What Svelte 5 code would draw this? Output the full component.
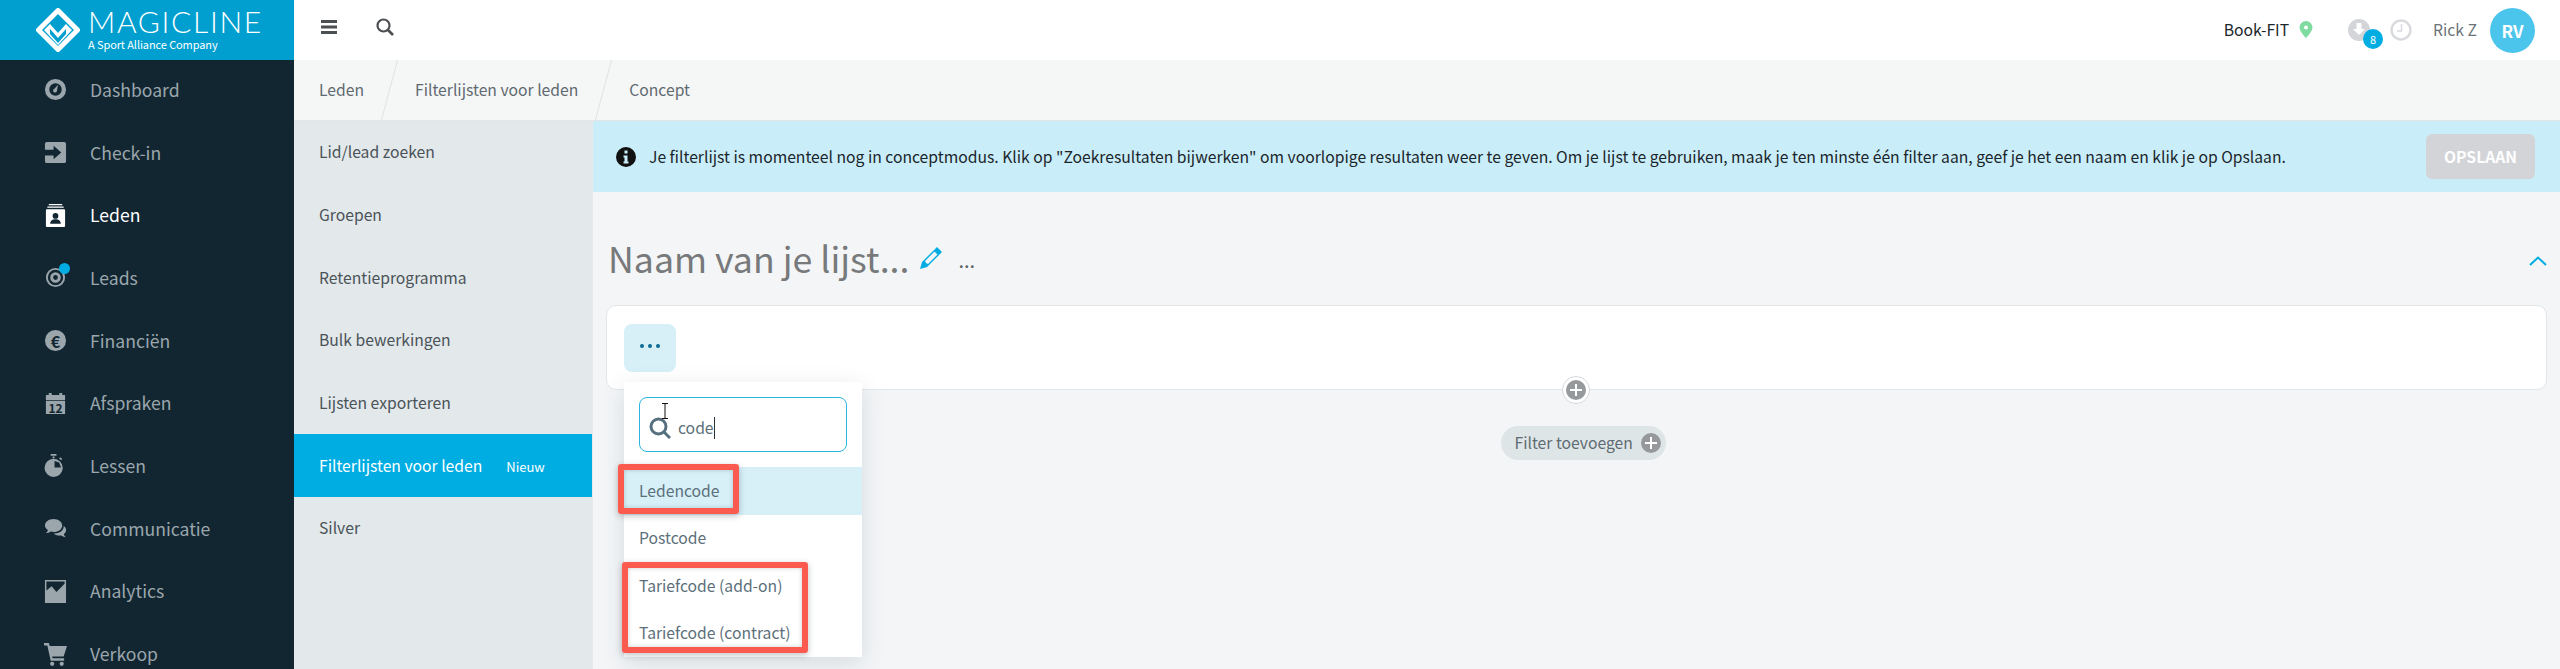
<script>
  const mainNav = [
    { label: 'Dashboard', d: 'M12 1a11 11 0 1 0 0 22 11 11 0 0 0 0-22zm0 4.500a6.500 6.500 0 1 1 0 13 6.500 6.500 0 0 1 0-13zM14.600 7l-3.700 4.200a2 2 0 1 0 2.600 2z' },
    { label: 'Check-in', d: 'M3 1h18a2 2 0 0 1 2 2v18a2 2 0 0 1-2 2H3a2 2 0 0 1-2-2v-6h9v4l8-7-8-7v4H1V3a2 2 0 0 1 2-2z' },
    { label: 'Leden', active: true, d: 'M5 0h14v1.200H5zM3.500 2.700h17v1.200h-17zM3 5.400h18a1 1 0 0 1 1 1V23a1 1 0 0 1-1 1H3a1 1 0 0 1-1-1V6.400a1 1 0 0 1 1-1zm9 4a3 3 0 1 0 0 6 3 3 0 0 0 0-6zm-5.500 11.100h11c0-3-2.500-4.500-5.500-4.500s-5.500 1.500-5.500 4.500z' },
    { label: 'Leads', dot: true, d: 'M12 2a10 10 0 1 0 0 20 10 10 0 0 0 0-20zm0 2a8 8 0 1 1 0 16 8 8 0 0 1 0-16zM12 6.500a5.500 5.500 0 1 0 0 11 5.500 5.500 0 0 0 0-11zm0 3a2.500 2.500 0 1 1 0 5 2.500 2.500 0 0 1 0-5z' },
    { label: 'Financiën', d: 'M12 1a11 11 0 1 0 0 22 11 11 0 0 0 0-22z', glyph: '€' },
    { label: 'Afspraken', d: 'M2 3h3V1h3v2h8V1h3v2h3v5.500H2zM2 9.300h20V23H2z', glyph: '12', small: true },
    { label: 'Lessen', d: 'M7 0h6v1.800H7zM9 2.500h2v2H9zM17 3.500l2 1.800-1.200 1.300-2-1.800zM10 5a9.500 9.500 0 1 0 .1 19A9.500 9.500 0 0 0 10 5zm1 2.400 4.800 1.400 2 5.200H11z' },
    { label: 'Communicatie', d: 'M10 2c5 0 9 3 9 6.800s-4 6.800-9 6.800c-1 0-2-.1-3-.4-1.500 1-3 1.600-5 1.800 1-1 1.800-2.200 2-3.500C2.200 12.300 1 10.700 1 8.800 1 5 5 2 10 2zm10.500 7.500c1.600 1 2.500 2.500 2.500 4.200 0 1.600-.9 3-2.300 4 .2 1.200.8 2.300 2 3.300-2-.2-3.500-.9-4.700-1.800-3 .6-6-.2-7.800-2 5.500.3 10.700-2.700 10.300-7.700z' },
    { label: 'Analytics', d: 'M1 0h22v24H1zm1.500 1.500V11L8 6.500l5 6 8.500-8.500V1.500z' },
    { label: 'Verkoop', d: 'M0 0h5l1 3h18l-3.500 11H8.500l.5 2h12v2.500H7L3.500 2.500H0zM8.500 19.500a2.200 2.200 0 1 1 0 4.400 2.200 2.200 0 0 1 0-4.400zm10 0a2.200 2.200 0 1 1 0 4.400 2.200 2.200 0 0 1 0-4.400z' }
  ];
  const subNav = ['Lid/lead zoeken', 'Groepen', 'Retentieprogramma', 'Bulk bewerkingen', 'Lijsten exporteren', 'Filterlijsten voor leden', 'Silver'];
  const crumbs = ['Leden', 'Filterlijsten voor leden', 'Concept'];
  const options = ['Ledencode', 'Postcode', 'Tariefcode (add-on)', 'Tariefcode (contract)'];
</script>

<div class="app">
  <aside class="rail">
    <div class="brand">
      <svg class="brand-mark" viewBox="0 0 44 44" width="44" height="44">
        <path d="M22 2.500 41.500 22 22 41.500 2.500 22z" fill="none" stroke="#fff" stroke-width="5" stroke-linejoin="round"/>
        <path d="M8 22l6-6 8 9 8-9 6 6-14 15z" fill="#fff"/>
        <path d="M14 21v5l8 9 8-9v-5l-8 9z" fill="#009fcf"/>
      </svg>
      <div class="brand-text">
        <span class="brand-name">MAGICLINE</span>
        <span class="brand-sub">A Sport Alliance Company</span>
      </div>
    </div>
    <nav class="main-nav">
      {#each mainNav as item}
        <div class="main-item" class:active={item.active}>
          <span class="main-icon">
            <svg viewBox="0 0 24 24" width="23" height="23"><path d={item.d} fill="currentColor" fill-rule="evenodd"/></svg>
            {#if item.glyph}<span class="glyph" class:small={item.small}>{item.glyph}</span>{/if}
            {#if item.dot}<span class="nav-dot"></span>{/if}
          </span>
          <span>{item.label}</span>
        </div>
      {/each}
    </nav>
  </aside>

  <div class="main">
    <header class="topbar">
      <svg class="menu-icon" viewBox="0 0 16 14" width="16" height="14"><path d="M0 0h16v3H0zM0 5.500h16v3H0zM0 11h16v3H0z" fill="#4c4f52"/></svg>
      <svg class="search-icon" viewBox="0 0 18 18" width="18" height="18"><circle cx="7.500" cy="7.500" r="6" fill="none" stroke="#4c4f52" stroke-width="2.200"/><path d="M12 12l5 5" stroke="#4c4f52" stroke-width="2.600"/></svg>
      <div class="top-right">
        <span class="studio">Book-FIT</span>
        <svg class="pin" viewBox="0 0 14 17" width="14" height="17"><path d="M7 0a6.500 6.500 0 0 1 6.500 6.500C13.500 10.500 7 17 7 17S.5 10.500.5 6.500A6.500 6.500 0 0 1 7 0zm0 4.500a2 2 0 1 0 0 4 2 2 0 0 0 0-4z" fill="#7fdb9f" fill-rule="evenodd"/></svg>
        <span class="download">
          <svg viewBox="0 0 22 22" width="22" height="22"><path d="M11 0a11 11 0 1 1 0 22 11 11 0 0 1 0-22zM8.500 4v6H5l6 6 6-6h-3.500V4z" fill="#d3d5d8" fill-rule="evenodd"/></svg>
          <span class="badge">8</span>
        </span>
        <svg class="clock" viewBox="0 0 22 22" width="22" height="22"><circle cx="11" cy="11" r="9.500" fill="none" stroke="#d8dadd" stroke-width="2.400"/><path d="M11.500 5v7H7" fill="none" stroke="#d8dadd" stroke-width="1.500"/></svg>
        <span class="user">Rick Z</span>
        <span class="avatar">RV</span>
      </div>
    </header>

    <div class="crumbs">
      {#each crumbs as crumb, i}
        <span class="crumb" class:last={i === crumbs.length - 1}>{crumb}</span>
      {/each}
    </div>

    <div class="body">
      <nav class="sub-nav">
        {#each subNav as item}
          <div class="sub-item" class:active={item === 'Filterlijsten voor leden'}>
            <span>{item}</span>
            {#if item === 'Filterlijsten voor leden'}<span class="new">Nieuw</span>{/if}
          </div>
        {/each}
      </nav>

      <section class="content">
        <div class="notice">
          <svg class="info" viewBox="0 0 20 20" width="20" height="20"><path d="M10 0a10 10 0 1 1 0 20 10 10 0 0 1 0-20zM8.500 3.500v3h3v-3zM7.500 8.500v2h1v4h-1v2h5v-2h-1v-6z" fill="#111" fill-rule="evenodd"/></svg>
          <p>Je filterlijst is momenteel nog in conceptmodus. Klik op "Zoekresultaten bijwerken" om voorlopige resultaten weer te geven. Om je lijst te gebruiken, maak je ten minste één filter aan, geef je het een naam en klik je op Opslaan.</p>
          <button class="save">OPSLAAN</button>
        </div>

        <div class="title-row">
          <h1>Naam van je lijst...</h1>
          <svg class="pencil" viewBox="0 0 24 24" width="24" height="24"><path d="M18 1l5 5L8 21l-7 2 2-7zM15.500 5.500 6 15l1 2 2 1 9.500-9.500z" fill="#00ade2" fill-rule="evenodd"/></svg>
          <span class="title-more">...</span>
          <svg class="chevron" viewBox="0 0 18 10" width="18" height="10"><path d="M1 9l8-7.500L17 9" fill="none" stroke="#00ade2" stroke-width="2"/></svg>
        </div>

        <div class="card">
          <button class="more"><i></i><i></i><i></i></button>
          <span class="add-circle"><span class="plus"></span></span>

          <div class="popup">
            <div class="search-field">
              <svg viewBox="0 0 22 22" width="22" height="22"><circle cx="9.500" cy="9.500" r="7.500" fill="none" stroke="#56707f" stroke-width="3"/><path d="M15 15l6 6" stroke="#56707f" stroke-width="3"/></svg>
              <span class="typed">code</span>
              <svg class="ibeam" viewBox="0 0 8 16" width="8" height="16"><path d="M1 .5h6M1 15.500h6M4 .5v15" fill="none" stroke="#111" stroke-width="1"/></svg>
            </div>
            <ul>
              {#each options as option, i}
                <li class:hover={i === 0}>{option}</li>
              {/each}
            </ul>
            <span class="mark mark-one"></span>
            <span class="mark mark-two"></span>
          </div>
        </div>

        <div class="add-row">
          <button class="add-filter">Filter toevoegen <span class="plus"></span></button>
        </div>
      </section>
    </div>
  </div>
</div>

<style>
  :global(body) {
    margin: 0;
    background: #f3f5f7;
  }
  .app {
    display: grid;
    grid-template-columns: 294px 1fr;
    height: 669px;
    overflow: hidden;
    font-family: "Noto Sans CJK SC", "Noto Sans", sans-serif;
    font-size: 15.700px;
    line-height: 24px;
  }

  /* Left rail */
  .rail {
    background: #122632;
    color: #9ba6ac;
    overflow: hidden;
  }
  .brand {
    height: 60px;
    background: #009fcf;
    display: flex;
    align-items: center;
    padding-left: 36px;
    gap: 8px;
    color: #fff;
  }
  .brand-text {
    display: flex;
    flex-direction: column;
  }
  .brand-name {
    font-family: Lato, sans-serif;
    font-weight: 300;
    font-size: 30px;
    line-height: 30px;
    letter-spacing: 1.700px;
    margin-top: -2px;
    white-space: nowrap;
  }
  .brand-sub {
    font-size: 11px;
    line-height: 16px;
    letter-spacing: -0.1px;
    white-space: nowrap;
  }
  .main-nav {
    display: flex;
    flex-direction: column;
    margin-top: -1.500px;
  }
  .main-item {
    height: 62.700px;
    flex: none;
    display: flex;
    align-items: center;
    gap: 22px;
    padding-left: 44px;
    font-size: 17.600px;
  }
  .main-item.active {
    color: #fff;
  }
  .main-icon {
    position: relative;
    width: 24px;
    height: 23px;
    display: block;
  }
  .main-icon svg {
    display: block;
  }
  .glyph {
    position: absolute;
    left: 0;
    width: 23px;
    top: 2px;
    text-align: center;
    font-size: 16px;
    line-height: 20px;
    font-weight: 700;
    color: #122632;
  }
  .glyph.small {
    top: 9px;
    font-size: 12px;
    line-height: 13px;
  }
  .nav-dot {
    position: absolute;
    top: -3px;
    right: -2px;
    width: 11px;
    height: 11px;
    border-radius: 50%;
    background: #00ade2;
  }

  /* Top bar */
  .main {
    display: flex;
    flex-direction: column;
    min-width: 0;
  }
  .topbar {
    height: 60px;
    flex: none;
    background: #fff;
    display: flex;
    align-items: center;
    padding: 0 25px 6px 27px;
    box-sizing: border-box;
    gap: 39px;
  }
  .top-right {
    margin-left: auto;
    display: flex;
    align-items: center;
    margin-top: 6px;
  }
  .studio {
    color: #20272b;
  }
  .pin {
    margin-left: 10px;
    margin-right: 35px;
    margin-top: -2px;
  }
  .download {
    position: relative;
    width: 22px;
    height: 22px;
    display: block;
    margin-top: -1px;
  }
  .download svg, .clock {
    display: block;
  }
  .badge {
    position: absolute;
    left: 15px;
    top: 10px;
    width: 20px;
    height: 20px;
    border-radius: 50%;
    background: #00ade2;
    color: #fff;
    font-size: 11px;
    line-height: 20px;
    text-align: center;
  }
  .clock {
    margin-left: 20px;
    margin-top: -1px;
  }
  .user {
    margin-left: 21px;
    color: #6d7478;
  }
  .avatar {
    margin-left: 13px;
    width: 45px;
    height: 45px;
    border-radius: 50%;
    background: #4cc5ec;
    color: #fff;
    font-weight: 700;
    font-size: 17px;
    line-height: 45px;
    text-align: center;
  }

  /* Breadcrumb */
  .crumbs {
    height: 61px;
    flex: none;
    box-sizing: border-box;
    background: #f5f6f6;
    border-bottom: 1px solid #e2e6e8;
    display: flex;
    align-items: stretch;
    overflow: hidden;
    color: #5f6a70;
  }
  .crumb {
    position: relative;
    display: flex;
    align-items: center;
    padding: 0 26px 0 25px;
  }
  .crumb::after {
    content: '';
    position: absolute;
    right: 0;
    top: -2px;
    bottom: -2px;
    width: 1px;
    background: #e0e3e5;
    transform: rotate(15deg);
  }
  .crumb.last::after {
    display: none;
  }

  /* Second column */
  .body {
    flex: 1;
    min-height: 0;
    display: grid;
    grid-template-columns: 298px 1fr;
  }
  .sub-nav {
    background: #e3e8eb;
    color: #4a5358;
    display: flex;
    flex-direction: column;
  }
  .sub-item {
    height: 62.700px;
    flex: none;
    display: flex;
    align-items: center;
    padding-left: 25px;
    gap: 24px;
  }
  .sub-item.active {
    background: #00ade2;
    color: #fff;
  }
  .new {
    font-size: 13px;
    margin-top: 3px;
  }

  /* Content */
  .content {
    background: #f3f5f7;
    display: flex;
    flex-direction: column;
    min-width: 0;
    border-left: 1px solid #e7eaec;
  }
  .notice {
    height: 71px;
    flex: none;
    background: #caeef9;
    display: flex;
    align-items: center;
    padding: 0 25px 0 23px;
    color: #1a252b;
  }
  .notice p {
    margin: 0 0 0 13px;
    flex: 1;
    white-space: nowrap;
  }
  .save {
    width: 109px;
    height: 45px;
    border: 0;
    border-radius: 6px;
    background: #d2d4d8;
    color: #fff;
    font: inherit;
    font-weight: 700;
    padding: 0;
  }
  .title-row {
    height: 113px;
    flex: none;
    display: flex;
    align-items: center;
    padding: 18px 13px 0 15px;
    box-sizing: border-box;
  }
  h1 {
    margin: 0;
    font-size: 35.700px;
    line-height: 48px;
    font-weight: 400;
    color: #77797b;
  }
  .pencil {
    margin-left: 10px;
  }
  .title-more {
    margin-left: 15px;
    font-size: 20px;
    color: #5c6366;
    margin-top: 4px;
  }
  .chevron {
    margin-left: auto;
    margin-top: 6px;
  }
  .card {
    position: relative;
    height: 85px;
    flex: none;
    margin: 0 13px 0 13px;
    box-sizing: border-box;
    background: #fff;
    border: 1px solid #e2e6e8;
    border-radius: 10px;
    padding: 18px 17px;
  }
  .more {
    width: 52px;
    height: 48px;
    border: 0;
    border-radius: 8px;
    background: #d7f0f8;
    display: flex;
    align-items: center;
    justify-content: center;
    gap: 4px;
    padding: 0 0 4px;
  }
  .more i {
    width: 4px;
    height: 4px;
    border-radius: 50%;
    background: #0b6b94;
  }
  .add-circle {
    position: absolute;
    left: 955px;
    top: 70px;
    width: 28px;
    height: 28px;
    box-sizing: border-box;
    border: 1px solid #d6d9db;
    border-radius: 50%;
    background: #fff;
    display: flex;
    align-items: center;
    justify-content: center;
  }
  .plus {
    position: relative;
    display: block;
    width: 20px;
    height: 20px;
    flex: none;
    border-radius: 50%;
    background: #96999c;
  }
  .plus::before, .plus::after {
    content: '';
    position: absolute;
    background: #fff;
  }
  .plus::before {
    left: 4px;
    right: 4px;
    top: 9px;
    height: 2px;
  }
  .plus::after {
    top: 4px;
    bottom: 4px;
    left: 9px;
    width: 2px;
  }

  /* Dropdown */
  .popup {
    position: absolute;
    left: 17px;
    top: 76px;
    width: 238px;
    height: 275px;
    background: #fff;
    box-shadow: 0 6px 22px rgba(60, 70, 80, 0.14);
    z-index: 2;
  }
  .search-field {
    position: relative;
    margin: 15px 15px;
    height: 55px;
    box-sizing: border-box;
    border: 1px solid #2bb5e0;
    border-radius: 8px;
    display: flex;
    align-items: center;
    gap: 7px;
    padding: 6px 0 0 9px;
    color: #5c6f7a;
  }
  .typed {
    border-right: 1px solid #2a3338;
    line-height: 22px;
  }
  .ibeam {
    position: absolute;
    left: 21px;
    top: 5px;
  }
  .popup ul {
    list-style: none;
    margin: 0;
    padding: 0;
  }
  .popup li {
    height: 47.500px;
    display: flex;
    align-items: center;
    padding-left: 15px;
    color: #5c6f7a;
  }
  .popup li.hover {
    background: #d7f0f8;
  }
  .mark {
    position: absolute;
    box-sizing: border-box;
    border: 6px solid #fb5a4e;
    border-radius: 3px;
    box-shadow: 0 2px 6px rgba(40, 50, 60, 0.3), inset 0 0 4px rgba(40, 50, 60, 0.25);
  }
  .mark-one {
    left: -6px;
    top: 82px;
    width: 121px;
    height: 50px;
  }
  .mark-two {
    left: -2px;
    top: 180px;
    width: 186px;
    height: 91px;
  }

  .add-row {
    display: flex;
    justify-content: center;
    padding-top: 36px;
    padding-left: 13px;
  }
  .add-filter {
    height: 34px;
    width: 165px;
    box-sizing: border-box;
    border: 0;
    border-radius: 17px;
    background: #dee5e7;
    color: #5f6b72;
    font: inherit;
    white-space: nowrap;
    display: flex;
    align-items: center;
    justify-content: space-between;
    padding: 0 5px 0 14px;
  }
</style>
